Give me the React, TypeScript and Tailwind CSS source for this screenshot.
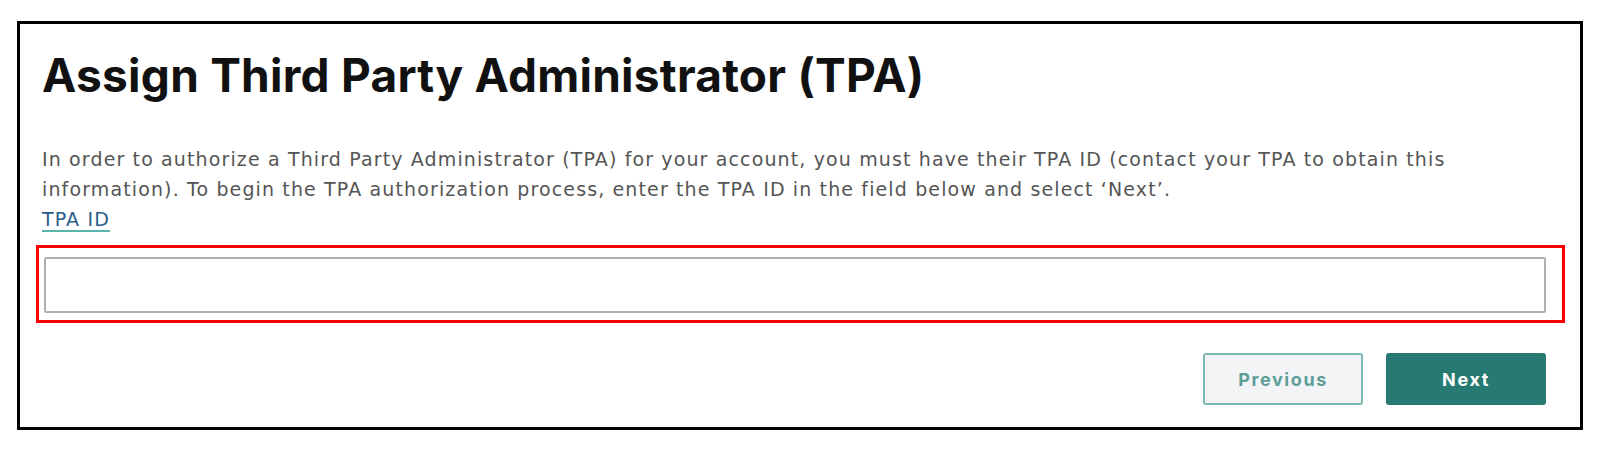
export default function App() {
  return (
    <div className="min-h-screen bg-white pl-[17px] pt-[21px]" style={{ fontFamily: '"DejaVu Sans", "Noto Sans", sans-serif' }}>
      <div className="w-[1566px] h-[409px] border-[3px] border-black bg-white pl-[16px]">
        <div className="pl-[6px]">
          <h1 className="pt-[24px] text-[46px] leading-[54px] font-bold tracking-[0.25px] text-[#111]" style={{ fontFamily: 'Inter, "Noto Sans", sans-serif' }}>
            Assign Third Party Administrator (TPA)
          </h1>
          <p className="mt-[42px] text-[19px] leading-[30px] tracking-[1.13px] text-[#555]">
            In order to authorize a Third Party Administrator (TPA) for your account, you must have their TPA ID (contact your TPA to obtain this
            <br />
            information). To begin the TPA authorization process, enter the TPA ID in the field below and select ‘Next’.
          </p>
          <a href="#" className="block w-fit text-[19px] leading-[30px] tracking-[1.13px] text-[#2a5d8a] underline decoration-[#5ab5ad] decoration-2 underline-offset-4">
            TPA ID
          </a>
        </div>
        <div className="mt-[11px] w-[1529px] border-[3px] border-[#ff0000] pl-[5px] pt-[9px] pb-[7px]">
          <input type="text" className="block w-[1502px] h-[56px] border-2 border-[#b0b0b0] rounded-[2px] bg-white outline-none" />
        </div>
        <div className="flex justify-end gap-[23px] w-[1510px] mt-[30px]" style={{ fontFamily: 'Inter, "Noto Sans", sans-serif' }}>
          <button className="w-[160px] h-[52px] rounded-[3px] border-2 border-[#7db8b1] bg-[#f3f4f6] text-[18px] font-bold tracking-[1.6px] text-[#5d9f98]">
            Previous
          </button>
          <button className="w-[160px] h-[52px] rounded-[3px] bg-[#267a71] text-[18px] font-bold tracking-[1.6px] text-white">
            Next
          </button>
        </div>
      </div>
    </div>
  );
}
